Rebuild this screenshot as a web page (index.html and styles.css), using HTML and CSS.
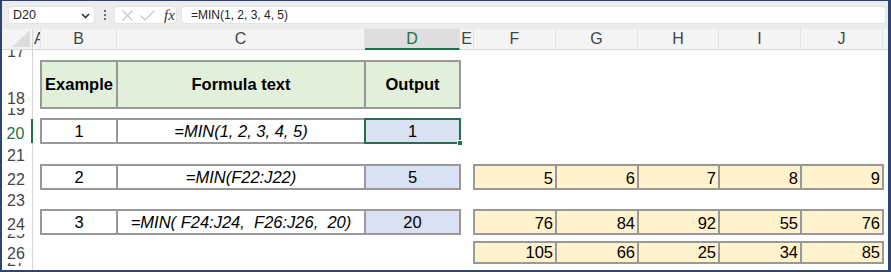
FILE: index.html
```html
<!DOCTYPE html>
<html lang="en">
<head>
<meta charset="utf-8">
<title>MIN function</title>
<link rel="stylesheet" href="styles.css">
</head>
<body>
<div class="frame">
  <div class="fbar">
    <div class="namebox">
      <span>D20</span>
      <svg class="chev" width="9" height="6" viewBox="0 0 9 6"><path d="M1 1 L4.5 4.5 L8 1" fill="none" stroke="#333" stroke-width="1.6"/></svg>
    </div>
    <div class="dots"><i></i><i></i><i></i></div>
    <div class="iconbox">
      <svg class="ix" width="11" height="11" viewBox="0 0 11 11"><path d="M0.5 0.5 L10.5 10.5 M10.5 0.5 L0.5 10.5" stroke="#c4c4c4" stroke-width="1.1" fill="none"/></svg>
      <svg class="ick" width="15" height="11" viewBox="0 0 15 11"><path d="M0.5 5.5 L5 10 L14.5 0.5" stroke="#c4c4c4" stroke-width="1.1" fill="none"/></svg>
      <span class="fx">fx</span>
    </div>
    <div class="fbox">=MIN(1, 2, 3, 4, 5)</div>
  </div>

  <div class="sheet">
    <div class="corner"><svg width="18" height="17" viewBox="0 0 18 17"><path d="M18 0 L18 17 L0 17 Z" fill="#dcdcdc"/></svg></div>
    <div class="ch ca">A</div>
    <div class="ch">B</div>
    <div class="ch">C</div>
    <div class="ch selc">D</div>
    <div class="ch">E</div>
    <div class="ch">F</div>
    <div class="ch">G</div>
    <div class="ch">H</div>
    <div class="ch">I</div>
    <div class="ch">J</div>
    <div class="ch last"></div>

    <div class="rh">17</div>

    <div class="rh">18</div>
    <div class="cell hdr cB">Example</div>
    <div class="cell hdr cC">Formula text</div>
    <div class="cell hdr cD">Output</div>

    <div class="rh">19</div>

    <div class="rh sel">20</div>
    <div class="cell cB">1</div>
    <div class="cell f cC">=MIN(1, 2, 3, 4, 5)</div>
    <div class="cell out cD selected">1</div>

    <div class="rh">21</div>

    <div class="rh">22</div>
    <div class="cell cB">2</div>
    <div class="cell f cC">=MIN(F22:J22)</div>
    <div class="cell out cD">5</div>
    <div class="cell num cF">5</div>
    <div class="cell num cG">6</div>
    <div class="cell num cH">7</div>
    <div class="cell num cI">8</div>
    <div class="cell num cJ">9</div>

    <div class="rh">23</div>

    <div class="rh">24</div>
    <div class="cell cB">3</div>
    <div class="cell f cC">=MIN( F24:J24,  F26:J26,  20)</div>
    <div class="cell out cD">20</div>
    <div class="cell num cF">76</div>
    <div class="cell num cG">84</div>
    <div class="cell num cH">92</div>
    <div class="cell num cI">55</div>
    <div class="cell num cJ">76</div>

    <div class="rh">25</div>

    <div class="rh">26</div>
    <div class="cell num cF">105</div>
    <div class="cell num cG">66</div>
    <div class="cell num cH">25</div>
    <div class="cell num cI">34</div>
    <div class="cell num cJ">85</div>

    <div class="rh">27</div>
  </div>
</div>
</body>
</html>
```

FILE: styles.css
```css
html, body {
  margin: 0;
  padding: 0;
}

body {
  width: 891px;
  height: 272px;
  overflow: hidden;
  font-family: "Liberation Sans", Arial, sans-serif;
  background: #2c4474;
}

.frame {
  box-sizing: border-box;
  width: 891px;
  height: 272px;
  border-style: solid;
  border-color: #2c4474;
  border-width: 1px 3px 2px 2px;
  display: flex;
  flex-direction: column;
  background: #fff;
  overflow: hidden;
}

/* ---------- formula bar ---------- */
.fbar {
  flex: none;
  height: 28px;
  background: #ececec;
  display: flex;
  align-items: center;
  padding-left: 6px;
  padding-right: 2px;
}

.namebox,
.iconbox,
.fbox {
  box-sizing: border-box;
  height: 18px;
  background: #fff;
  border-radius: 4px;
  border: 1px solid #e4e4e4;
}

.namebox {
  width: 87px;
  display: flex;
  align-items: center;
  justify-content: space-between;
  padding: 0 4px 0 4px;
  font-size: 12.5px;
  color: #222;
}

.chev {
  margin-top: 1px;
}

.dots {
  margin-left: 9px;
  width: 2px;
  display: flex;
  flex-direction: column;
  gap: 2px;
}

.dots i {
  display: block;
  width: 2px;
  height: 2px;
  background: #444;
  border-radius: 1px;
}

.iconbox {
  margin-left: 8px;
  width: 63px;
  display: flex;
  align-items: center;
  padding-left: 7px;
}

.ick {
  margin-left: 7px;
}

.fx {
  margin-left: 9px;
  font-family: "Liberation Serif", "Times New Roman", serif;
  font-style: italic;
  font-size: 15px;
  color: #333;
  line-height: 16px;
}

.fbox {
  margin-left: 4px;
  flex: 1;
  display: flex;
  align-items: center;
  padding-left: 9px;
  font-size: 12px;
  color: #222;
}

/* ---------- sheet grid ---------- */
.sheet {
  flex: 1;
  display: grid;
  grid-template-columns: 31px 8px 76px 248px 95px 14px 82px 82px 81px 82px 82px 1fr;
  grid-template-rows: 21px 11px 47px 11px 24px 22px 24px 21px 24px 8px 21px 1fr;
  overflow: hidden;
}

.corner {
  grid-column: 1;
  background: #f4f4f4;
  border-right: 1px solid #d6d6d6;
  border-bottom: 1px solid #d6d6d6;
  display: flex;
  align-items: flex-end;
  justify-content: flex-end;
  padding: 0 2px 2px 0;
}

.ch {
  background: #f4f4f4;
  border-bottom: 1px solid #d6d6d6;
  border-right: 1px solid #e2e2e2;
  display: flex;
  align-items: center;
  justify-content: center;
  overflow: hidden;
  font-size: 16px;
  color: #444;
  line-height: 18px;
}

.ch.ca {
  justify-content: flex-start;
  padding-left: 1px;
}

.ch.last {
  border-right: none;
}

.ch.selc {
  background: #dedede;
  color: #1e7145;
  border-bottom: 2px solid #1e7145;
}

.rh {
  grid-column: 1;
  background: #fff;
  border-right: 1px solid #d6d6d6;
  display: flex;
  align-items: flex-end;
  justify-content: center;
  overflow: hidden;
  font-size: 16px;
  line-height: 18px;
  color: #444;
  padding-right: 2px;
}

.rh.sel {
  color: #1e7145;
  border-right: 2px solid #1e7145;
}

.cB { grid-column: 3; }
.cC { grid-column: 4; }
.cD { grid-column: 5; }
.cF { grid-column: 7; }
.cG { grid-column: 8; }
.cH { grid-column: 9; }
.cI { grid-column: 10; }
.cJ { grid-column: 11; }

.cell {
  margin: -1px;
  border: 2px solid #999;
  display: flex;
  align-items: center;
  justify-content: center;
  font-size: 16.5px;
  color: #000;
  white-space: pre;
  overflow: hidden;
  background: #fff;
}

.cell.hdr {
  background: #e2efda;
  font-weight: bold;
}

.cell.f {
  font-style: italic;
}

.cell.out {
  background: #d9e1f2;
}

.cell.num {
  background: #fff2cc;
  justify-content: flex-end;
  align-items: flex-end;
  padding-right: 2px;
}

.cell.selected {
  position: relative;
  z-index: 2;
  overflow: visible;
  border-color: #217346;
}

.cell.selected::after {
  content: "";
  position: absolute;
  right: -4px;
  bottom: -4px;
  width: 4px;
  height: 4px;
  background: #217346;
  border: 1px solid #fff;
}
```
